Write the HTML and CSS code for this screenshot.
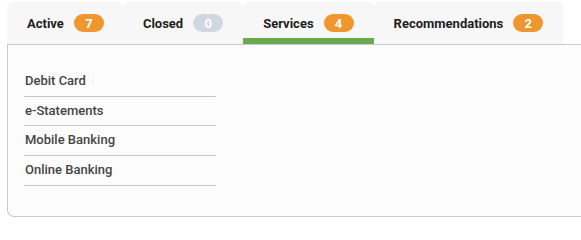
FILE: index.html
```html
<!DOCTYPE html>
<html lang="en">
<head>
<meta charset="utf-8">
<title>Accounts</title>
<link rel="stylesheet" href="styles.css">
</head>
<body>
<div class="wrap">
  <div class="tabs">
    <div class="tab tab-first"><span class="tab-label">Active</span><span class="badge badge-orange">7</span></div>
    <div class="tab"><span class="tab-label">Closed</span><span class="badge badge-grey">0</span></div>
    <div class="tab tab-selected"><span class="tab-label">Services</span><span class="badge badge-orange">4</span></div>
    <div class="tab"><span class="tab-label">Recommendations</span><span class="badge badge-orange">2</span></div>
  </div>
  <div class="panel">
    <ul class="list">
      <li class="item">Debit Card</li>
      <li class="item">e-Statements</li>
      <li class="item">Mobile Banking</li>
      <li class="item">Online Banking</li>
    </ul>
  </div>
</div>
</body>
</html>
```
FILE: styles.css
```css
html, body {
  margin: 0;
  padding: 0;
  background: #ffffff;
  overflow: hidden;
}
body {
  font-family: Roboto, "Liberation Sans", sans-serif;
}
.wrap {
  padding: 2px 0 0 7px;
  width: 620px;
}
.tabs {
  display: flex;
  align-items: stretch;
}
.tab {
  display: flex;
  align-items: center;
  gap: 10px;
  height: 42px;
  padding: 0 20px;
  box-sizing: border-box;
  background: #f7f7f7;
  border-radius: 5px 5px 0 0;
}
.tab-first {
  padding-right: 19px;
}
.tab-selected {
  box-shadow: inset 0 -6px 0 #6aaa4d;
}
.tab-label {
  font-size: 13px;
  font-weight: 700;
  color: #1e1e1e;
}
.badge {
  display: inline-flex;
  align-items: center;
  justify-content: center;
  width: 30px;
  height: 18px;
  border-radius: 9px;
  font-size: 13px;
  font-weight: 700;
  color: #ffffff;
}
.badge-orange {
  background: #f0962e;
}
.badge-grey {
  background: #d0d7e3;
}
.panel {
  border: 1px solid #c9c9da;
  border-right: none;
  border-radius: 0 0 0 7px;
  background: #fcfcfc;
  height: 173px;
  box-sizing: border-box;
  padding: 22px 0 0 16px;
}
.list {
  list-style: none;
  margin: 0;
  padding: 0;
  width: 192px;
}
.item {
  font-size: 13px;
  font-weight: 500;
  color: #454545;
  line-height: 15.67px;
  padding: 6px 0 7px 1px;
  border-bottom: 1px solid #c5c5d3;
}
```
